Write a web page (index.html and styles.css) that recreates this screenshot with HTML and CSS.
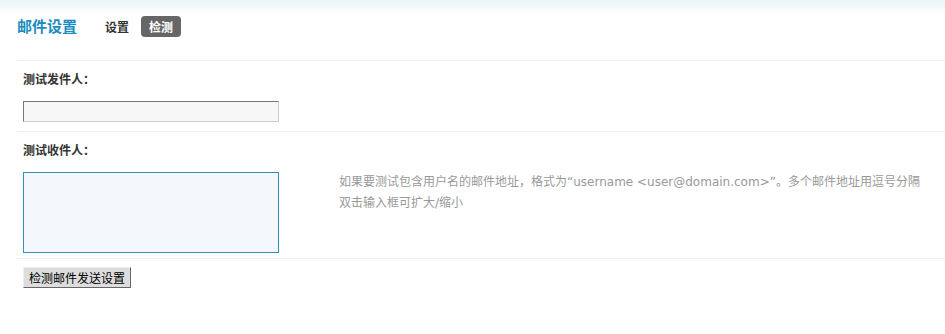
FILE: index.html
```html
<!DOCTYPE html>
<html lang="zh-CN">
<head>
<meta charset="utf-8">
<title>邮件设置</title>
<link rel="stylesheet" href="styles.css">
</head>
<body>
<div class="topbar"></div>
<div class="page">
  <div class="header">
    <h3 class="title">邮件设置</h3>
    <nav class="tabs">
      <a class="tab">设置</a>
      <a class="tab current">检测</a>
    </nav>
  </div>

  <div class="field">
    <div class="label">测试发件人：</div>
    <div class="row">
      <div class="control"><input class="txt" type="text"></div>
      <div class="tip"></div>
    </div>
  </div>

  <div class="field field-last">
    <div class="label">测试收件人：</div>
    <div class="row">
      <div class="control"><textarea class="tarea"></textarea></div>
      <div class="tip">如果要测试包含用户名的邮件地址，格式为“username &lt;user@domain.com&gt;”。多个邮件地址用逗号分隔<br>双击输入框可扩大/缩小</div>
    </div>
  </div>

  <div class="submit">
    <button class="btn" type="button">检测邮件发送设置</button>
  </div>
</div>
</body>
</html>
```

FILE: styles.css
```css
html, body {
  margin: 0;
  padding: 0;
  background: #fff;
}
body {
  font-family: "DejaVu Sans", "Noto Sans CJK SC", sans-serif;
  font-size: 12px;
  color: #333;
  position: relative;
}
.topbar {
  position: absolute;
  left: 0;
  top: 0;
  right: 0;
  height: 14px;
  background: linear-gradient(#eaf5f7, #ffffff);
}
.page {
  position: relative;
  padding-left: 17px;
}
.header {
  display: flex;
  align-items: center;
  box-sizing: border-box;
  height: 60px;
  padding-bottom: 8px;
}
.title {
  margin: 0;
  font-family: "Noto Sans CJK SC", sans-serif;
  font-size: 15px;
  font-weight: bold;
  color: #1a8cbf;
  line-height: 20px;
}
.tabs {
  display: flex;
  align-items: center;
  margin-left: 27px;
  gap: 11px;
}
.tab {
  font-family: "Noto Sans CJK SC", sans-serif;
  font-weight: bold;
  font-size: 12px;
  color: #333;
  line-height: 21px;
  padding: 0 1px;
}
.tab.current {
  background: #666;
  color: #fff;
  border-radius: 4px;
  padding: 0 8px;
}
.field {
  border-top: 1px solid #f0f0f0;
}
.label {
  font-family: "Noto Sans CJK SC", sans-serif;
  font-weight: bold;
  color: #333;
  line-height: 18px;
  padding: 9px 0 0 6px;
}
.row {
  display: flex;
  align-items: flex-start;
  padding-top: 13px;
  padding-bottom: 9px;
}
.field-last .row {
  padding-bottom: 5px;
}
.control {
  width: 316px;
  padding-left: 6px;
  box-sizing: border-box;
}
.txt {
  display: block;
  margin: 0;
  width: 256px;
  height: 21px;
  box-sizing: border-box;
  border: 1px solid;
  border-color: #777 #ccc #ccc #777;
  background: #f7f7f7;
  padding: 0 3px;
}
.tarea {
  display: block;
  margin: 0;
  width: 256px;
  height: 81px;
  box-sizing: border-box;
  border: 1px solid #3090b8;
  background: #f4f8fc;
  resize: none;
  padding: 2px;
}
.tip {
  flex: 1;
  padding-left: 6px;
  padding-top: 0;
  color: #999;
  line-height: 21px;
  font-family: "DejaVu Sans", "Noto Sans CJK SC", sans-serif;
  font-size: 12px;
}
.submit {
  border-top: 1px solid #f0f0f0;
  padding: 8px 0 0 6px;
}
.btn {
  font-family: "Noto Sans CJK SC", sans-serif;
  font-size: 12px;
  color: #000;
  background: #ddd;
  height: 21px;
  line-height: 17px;
  padding: 0 5px;
  border: 1px solid;
  border-color: #eee #666 #666 #eee;
  border-radius: 0;
  margin: 0;
}
```
